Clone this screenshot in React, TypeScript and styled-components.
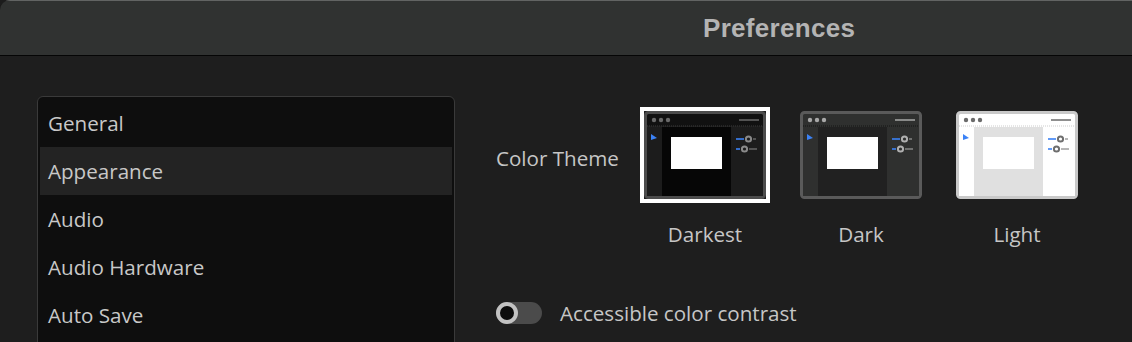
import * as React from "react"
import styled, { createGlobalStyle } from "styled-components"

const GlobalStyle = createGlobalStyle`
  html, body {
    margin: 0;
    padding: 0;
    background: #1c1c1c;
    overflow: hidden;
  }
`

const Window = styled.div`
  width: 1132px;
  height: 342px;
  background: #1e1e1e;
  border-top-left-radius: 10px;
  overflow: hidden;
  font-family: "Open Sans", "Liberation Sans", sans-serif;
`

const TitleBar = styled.header`
  height: 56px;
  box-sizing: border-box;
  background: #303231;
  border-top: 1px solid #626463;
  border-bottom: 1px solid #050505;
  display: flex;
  align-items: center;
  padding-left: 703px;
`

const Title = styled.h1`
  margin: 0;
  color: #b4b4b4;
  font: 700 26px "Liberation Sans", Arial, sans-serif;
  letter-spacing: 0.3px;
`

const Body = styled.main`
  display: flex;
  align-items: flex-start;
  padding: 40px 0 0 37px;
`

const Sidebar = styled.ul`
  width: 418px;
  box-sizing: border-box;
  height: 300px;
  margin: 0;
  padding: 2px 2px;
  list-style: none;
  background: #0e0e0e;
  border: 1px solid #3a3a3a;
  border-radius: 6px;
`

const NavItem = styled.li<{ $active?: boolean }>`
  height: 48px;
  display: flex;
  align-items: center;
  padding-left: 8px;
  color: #c8c8c8;
  font-size: 20.6px;
  background: ${(p) => (p.$active ? "#232323" : "transparent")};
`

const Settings = styled.section`
  margin-left: 41px;
  padding-top: 15px;
  display: flex;
  flex-direction: column;
`

const ThemeRow = styled.div`
  display: flex;
  align-items: flex-start;
`

const Label = styled.span`
  color: #c6c6c6;
  font-size: 20.6px;
`

const ThemeLabel = styled(Label)`
  width: 148px;
  line-height: 94px;
`

const Options = styled.div`
  display: flex;
  gap: 34px;
`

const Option = styled.div`
  width: 122px;
  display: flex;
  flex-direction: column;
  align-items: center;
`

const Thumb = styled.div<{ $selected?: boolean }>`
  width: 122px;
  height: 88px;
  outline: ${(p) => (p.$selected ? "4px solid #ffffff" : "none")};
  svg {
    display: block;
  }
`

const Caption = styled(Label)`
  margin-top: 21px;
  line-height: 28px;
`

const ToggleRow = styled.div`
  display: flex;
  align-items: center;
  gap: 18px;
  margin-top: 51px;
`

const Track = styled.div`
  width: 46px;
  height: 22px;
  border-radius: 11px;
  background: #4b4b4b;
  display: flex;
  align-items: center;
`

const Knob = styled.div`
  width: 22px;
  height: 22px;
  box-sizing: border-box;
  border-radius: 50%;
  border: 4px solid #c2c2c2;
  background: #0c0c0c;
`

type Palette = {
  border: string
  chrome: string
  canvas: string
  panel: string
  dots: string
  sep: string
  knob: string
}

const palettes: Record<string, Palette> = {
  Darkest: { border: "#4c4c4c", chrome: "#111111", canvas: "#060606", panel: "#1c1c1c", dots: "#6a6a6a", sep: "#2e2e2e", knob: "#8a8a8a" },
  Dark: { border: "#5a5a5a", chrome: "#2f302f", canvas: "#212121", panel: "#2f302f", dots: "#a8a8a8", sep: "#1e1e1e", knob: "#b0b0b0" },
  Light: { border: "#c9c9c9", chrome: "#ffffff", canvas: "#e0e0e0", panel: "#ffffff", dots: "#6a6a6a", sep: "#dedede", knob: "#6e6e6e" },
}

const ThemePreview = ({ p }: { p: Palette }) => (
  <svg width="122" height="88" viewBox="0 0 122 88">
    <rect x="1.5" y="1.5" width="119" height="85" rx="3" fill={p.chrome} stroke={p.border} strokeWidth="3" />
    <rect x="3" y="15" width="116" height="70" fill={p.panel} />
    <line x1="3" y1="15" x2="119" y2="15" stroke={p.sep} strokeWidth="1.5" strokeDasharray="1 1" />
    <circle cx="10" cy="9" r="2.2" fill={p.dots} />
    <circle cx="17" cy="9" r="2.2" fill={p.dots} />
    <circle cx="24" cy="9" r="2.2" fill={p.dots} />
    <line x1="95" y1="9" x2="115" y2="9" stroke={p.dots} strokeWidth="1.5" />
    <rect x="18" y="16" width="69" height="69" fill={p.canvas} />
    <path d="M7 23 L13 27 L7 29 Z" fill="#3b82f6" />
    <rect x="27" y="26" width="51" height="32" fill="#ffffff" />
    <line x1="92" y1="28" x2="100" y2="28" stroke="#3b82f6" strokeWidth="1.6" />
    <circle cx="104.5" cy="28" r="2.6" fill="none" stroke={p.knob} strokeWidth="2" />
    <line x1="109" y1="28" x2="112" y2="28" stroke={p.knob} strokeWidth="1" />
    <line x1="92" y1="38" x2="96" y2="38" stroke="#3b82f6" strokeWidth="1.6" />
    <circle cx="100.5" cy="38" r="2.6" fill="none" stroke={p.knob} strokeWidth="2" />
    <line x1="105" y1="38" x2="113" y2="38" stroke={p.knob} strokeWidth="1" />
  </svg>
)

const items = ["General", "Appearance", "Audio", "Audio Hardware", "Auto Save"]
const themes = ["Darkest", "Dark", "Light"]

const App = () => {
  return (
    <Window>
      <GlobalStyle />
      <TitleBar>
        <Title>Preferences</Title>
      </TitleBar>
      <Body>
        <Sidebar>
          {items.map((name) => (
            <NavItem key={name} $active={name === "Appearance"}>
              {name}
            </NavItem>
          ))}
        </Sidebar>
        <Settings>
          <ThemeRow>
            <ThemeLabel>Color Theme</ThemeLabel>
            <Options>
              {themes.map((t) => (
                <Option key={t}>
                  <Thumb $selected={t === "Darkest"}>
                    <ThemePreview p={palettes[t]} />
                  </Thumb>
                  <Caption>{t}</Caption>
                </Option>
              ))}
            </Options>
          </ThemeRow>
          <ToggleRow>
            <Track>
              <Knob />
            </Track>
            <Label>Accessible color contrast</Label>
          </ToggleRow>
        </Settings>
      </Body>
    </Window>
  )
}

export default App
